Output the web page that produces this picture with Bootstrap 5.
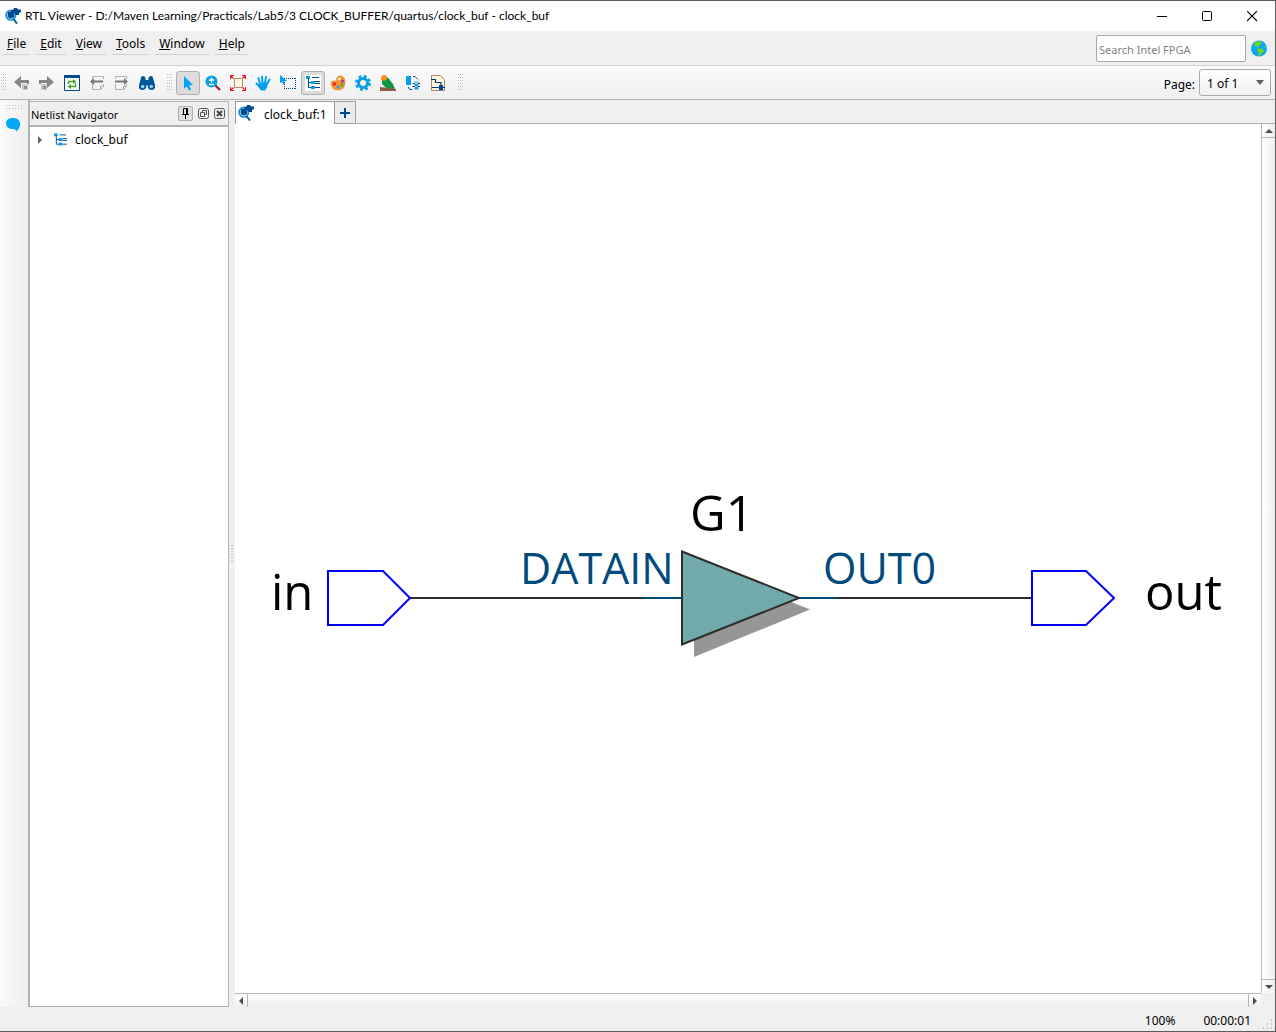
<!DOCTYPE html>
<html lang="en">
<head>
<meta charset="utf-8">
<meta name="viewport" content="width=device-width, initial-scale=1">
<title>RTL Viewer</title>
<link href="https://cdn.jsdelivr.net/npm/bootstrap@5.3.0/dist/css/bootstrap.min.css" rel="stylesheet">
<style>
  body { font-family: "Noto Sans", "Open Sans", sans-serif; font-size: 12px; line-height: 16px; color: #000; background: #efefef; }
  svg { display: block; }
  .app-window { border: 1px solid #5c5c5c; border-left: 0; }
  .title-bar { height: 30px; background: #fff; padding: 0 0 0 5px; }
  .title-text { font-family: Lato, "Open Sans", sans-serif; font-size: 12px; font-weight: 400; }
  .win-btn { width: 45px; height: 30px; border: 0; background: none; padding: 0; }
  .menu-bar { height: 34px; padding: 0 8px 0 3px; }
  .menu-items { gap: 6px; padding-top: 4px; }
  .menu-items a { color: #000; text-decoration: none; padding: 1px 4px 2px; border-bottom: 1px solid #d2d2d2; }
  .search-box { width: 150px; height: 27px; border: 1px solid #a9a9a9; border-radius: 2px; padding: 2px 2px 0; background: #fff; font-size: 11px; }
  .search-box::placeholder { color: #808080; }
  .tool-bar { height: 35px; border-top: 1px solid #d4d4d4; border-bottom: 1px solid #b4b4b4; background: linear-gradient(#fbfbfb, #efefef); padding: 0 4px 0 1px; }
  .tool-set { gap: 1px; }
  .tool-btn { width: 24px; height: 24px; border: 1px solid transparent; border-radius: 3px; padding: 0; background: none; }
  .tool-btn.is-on { background: #dcdcdc; border-color: #b0b0b0; }
  .grip-v { width: 5px; height: 18px; background: conic-gradient(from 0deg at 1px 1px, transparent 270deg, #c0c0c0 0) 0 0 / 2px 3px; }
  .grip-h { width: 16px; height: 5px; background: conic-gradient(from 0deg at 1px 1px, transparent 270deg, #c0c0c0 0) 0 0 / 3px 3px; }
  .page-select { width: 72px; height: 27px; border: 1px solid #a9a9a9; border-radius: 3px; appearance: none; background: linear-gradient(#fff, #f1f1f1); padding: 2px 7px 0; color: #000; font-size: 12px; }
  .page-arrow { top: 11px; right: 7px; pointer-events: none; }
  .side-strip { width: 30px; padding-top: 5px; background: linear-gradient(90deg, #fafafa, #efefef); border-right: 2px solid #b4b4b4; }
  .navigator { width: 199px; border: 1px solid #b4b4b4; border-left: 0; background: #fff; margin-top: 1px; }
  .nav-head { height: 25px; background: #efefef; border-bottom: 2px solid #b4b4b4; padding: 0 1px; }
  .nav-head h2 { font-size: 11px; line-height: 16px; font-weight: 400; padding-top: 3px; }
  .dock-btn { width: 15px; height: 15px; border: 0; background: none; padding: 0; }
  .dock-btn.is-pin { border: 1px solid #b0b0b0; border-radius: 2px; background: #dedede; }
  .tree-row { padding: 5px 8px; gap: 11px; }
  .splitter { width: 6px; }
  .splitter div { width: 2px; height: 17px; background: repeating-linear-gradient(#c4c4c4 0 1px, transparent 1px 3px); }
  .tab-row { height: 24px; border-bottom: 1px solid #b4b4b4; padding-top: 1px; }
  .doc-tab { width: 100px; height: 23px; background: #fff; border: 1px solid #9c9c9c; border-bottom: 0; padding: 0 3px 0 2px; gap: 10px; }
  .doc-tab span { padding-top: 3px; }
  .add-tab { width: 21px; height: 23px; border: 1px solid #a0a0a0; border-left: 0; background: #ebebeb; padding: 0; }
  .canvas-pane { background: #fff; }
  .bar-v { width: 14px; border-left: 1px solid #b9b9b9; background: linear-gradient(90deg, #fff, #efefef); }
  .bar-h { height: 14px; border-top: 1px solid #b9b9b9; background: linear-gradient(#fff, #efefef); }
  .step-btn { width: 13px; height: 14px; border: 0 solid #b9b9b9; background: none; padding: 0; }
  .step-up { border-bottom-width: 1px; }
  .step-down { border-top-width: 1px; }
  .step-left { border-right-width: 1px; }
  .step-right { border-left-width: 1px; }
  .corner { width: 14px; }
  .status-bar { height: 24px; padding: 6px 24px 0 0; gap: 28px; }
  .size-grip { right: 2px; bottom: 1px; }
  .canvas-svg text { font-family: "Open Sans", sans-serif; }
</style>
</head>
<body>
<svg width="0" height="0" class="position-absolute" aria-hidden="true">
  <symbol id="app-logo" viewBox="0 0 16 16">
    <circle cx="5.800" cy="7.200" r="4.800" fill="#75c6ee" stroke="#168fd0" stroke-width="1.600"/>
    <path d="M6 2h2l1-2h3l1 1.500h3V4l-2 1v2h-3L9 5 6 4z" fill="#00498c"/>
    <path d="M3 4h5l1 2v3l-2 1H4L3 8z" fill="#00498c"/>
    <path d="M8.500 11l3.500 4.500" stroke="#005a9e" stroke-width="2"/>
  </symbol>
  <symbol id="tree-icon" viewBox="0 0 14 14">
    <path d="M2.500 2v9.500h3M2.500 6.500h3M6 1.500h7M9 5.500h5M9 7.500h5M9 11.500h5" stroke="#00498c" fill="none"/>
    <path d="M0 0h4v3H0zM5 5h4v3H5zM5 10h4v3H5z" fill="#0a9be8"/>
  </symbol>
</svg>
<div class="app-window vh-100 d-flex flex-column overflow-hidden">
  <header class="title-bar d-flex align-items-center flex-shrink-0">
    <svg width="16" height="16" class="me-1"><use href="#app-logo"/></svg>
    <h1 class="title-text m-0 flex-grow-1 lh-1">RTL Viewer - D:/Maven Learning/Practicals/Lab5/3 CLOCK_BUFFER/quartus/clock_buf - clock_buf</h1>
    <button class="win-btn d-flex align-items-center justify-content-center" aria-label="Minimize"><svg width="11" height="11"><path d="M0 5.500h10" stroke="#000"/></svg></button>
    <button class="win-btn d-flex align-items-center justify-content-center" aria-label="Maximize"><svg width="11" height="11"><rect x=".5" y=".5" width="9" height="9" rx="1" fill="none" stroke="#000"/></svg></button>
    <button class="win-btn d-flex align-items-center justify-content-center" aria-label="Close"><svg width="11" height="11"><path d="M0 0l10 10M10 0L0 10" stroke="#000" stroke-width="1.100"/></svg></button>
  </header>

  <div class="menu-bar d-flex justify-content-between flex-shrink-0">
    <nav class="menu-items d-flex align-items-start" aria-label="Main menu">
      <a href="#"><u>F</u>ile</a><a href="#"><u>E</u>dit</a><a href="#"><u>V</u>iew</a><a href="#"><u>T</u>ools</a><a href="#"><u>W</u>indow</a><a href="#"><u>H</u>elp</a>
    </nav>
    <div class="d-flex align-items-center gap-1">
      <input class="search-box" type="search" placeholder="Search Intel FPGA" aria-label="Search Intel FPGA">
      <svg width="17" height="17" viewBox="0 0 17 17"><circle cx="9" cy="8.500" r="8" fill="#06a7f5"/><path d="M5 2l3-1 3 1 1 2-3 1-1 2 1 1-2-1-3-2zM9 8l4 1 1 2-2 2-2 3-2-1 1-2-2-3zM14 5l2 2-1 1z" fill="#6cd51c"/></svg>
    </div>
  </div>

  <div class="tool-bar d-flex align-items-center flex-shrink-0" role="toolbar" aria-label="Viewer tools">
    <div class="grip-v me-1"></div>
    <div class="tool-set d-flex">
      <button class="tool-btn d-flex align-items-center justify-content-center" aria-label="Back"><svg width="16" height="16"><path d="M0 7l7-6v4h8v4h-2V8H7v5z" fill="#858585"/><path d="M8 9h6v6H8z" fill="#c9c9c9"/><path d="M10 11h3v3h-3z" fill="#909090"/></svg></button>
      <button class="tool-btn d-flex align-items-center justify-content-center" aria-label="Forward"><svg width="16" height="16"><path d="M15 7L8 1v4H0v4h2V8h6v5z" fill="#858585"/><path d="M2 9h6v6H2z" fill="#c9c9c9"/><path d="M4 11h3v3H4z" fill="#909090"/></svg></button>
      <button class="tool-btn d-flex align-items-center justify-content-center" aria-label="Refresh"><svg width="16" height="16"><path d="M.5.5h15v15H.5z" fill="#fff" stroke="#00498c"/><path d="M0 0h16v3H0z" fill="#00498c"/><path d="M4.500 9V6.500H10M11.500 8v3.500H6" fill="none" stroke="#4aa02c" stroke-width="1.400"/><path d="M9 4l3.500 2.500L9 9zM7 9l-3.500 2.500L7 14z" fill="#4aa02c"/></svg></button>
      <button class="tool-btn d-flex align-items-center justify-content-center" aria-label="Previous page"><svg width="16" height="16"><path d="M3.500 4V1.500h11V4M3.500 9v5.500h8l3-3V9M11.500 14v-3h3" stroke="#b0b0b0" fill="none"/><path d="M1 6.500l4-3.500v2.500h9v2H5V10z" fill="#777"/></svg></button>
      <button class="tool-btn d-flex align-items-center justify-content-center" aria-label="Next page"><svg width="16" height="16"><path d="M1.500 4V1.500h11V4M1.500 9v5.500h8l3-3V9M9.500 14v-3h3" stroke="#b0b0b0" fill="none"/><path d="M14 6.500L10 3v2.500H1v2h9V10z" fill="#777"/></svg></button>
      <button class="tool-btn d-flex align-items-center justify-content-center" aria-label="Find"><svg width="16" height="16"><path d="M2 3q0-2 2-2t2.500 2v2h3V3q.5-2 2.500-2t2 2l2 7v3q-1 2-3.500 2T9 13l-.5-3h-1L7 13q-1 2-3.500 2T0 13v-3z" fill="#00559b"/><circle cx="3.700" cy="11.500" r="1.800" fill="#8bd0f5"/><circle cx="12.300" cy="11.500" r="1.800" fill="#8bd0f5"/></svg></button>
    </div>
    <div class="grip-v ms-2 me-1"></div>
    <div class="tool-set d-flex">
      <button class="tool-btn is-on d-flex align-items-center justify-content-center" aria-label="Select"><svg width="16" height="16"><path d="M4 1l9 9-4 .5 2 4-2 1-2-4-3 2z" fill="#00a5f5"/></svg></button>
      <button class="tool-btn d-flex align-items-center justify-content-center" aria-label="Zoom"><svg width="16" height="16"><path d="M10 10l5 5" stroke="#a31f1f" stroke-width="2.200"/><circle cx="6.500" cy="6.500" r="6" fill="#079fe9"/><path d="M4 5h5M6.500 2.500v5M4 9.500h5" stroke="#fff" stroke-width="1.300"/></svg></button>
      <button class="tool-btn d-flex align-items-center justify-content-center" aria-label="Fit in window"><svg width="16" height="16"><path d="M4.500 3.500h7l1 1v8h-8z" fill="#fff4dc" stroke="#a78d74"/><path d="M.5 4V.5H4M.5.5l3 3M15.500 4V.5H12M15.500.5l-3 3M.5 12v3.500H4M.5 15.500l3-3M15.500 12v3.500H12M15.500 15.500l-3-3" fill="none" stroke="#ed1c24" stroke-width="1.200"/></svg></button>
      <button class="tool-btn d-flex align-items-center justify-content-center" aria-label="Hand"><svg width="16" height="16"><path d="M5 9L3.500 3M7.500 8L7 1.500M10 8l1-6M12 9l2.500-4.500M5 12L1.500 8.500" stroke="#079fe9" stroke-width="2" stroke-linecap="round"/><path d="M4 8l9-.5-1 5-2 3H6l-3-4z" fill="#079fe9"/></svg></button>
      <button class="tool-btn d-flex align-items-center justify-content-center" aria-label="Area select"><svg width="16" height="16"><path d="M4 3.500h12M4 13.500h12M4.500 3v11M15.500 3v11" fill="none" stroke="#00498c" stroke-dasharray="1 1" shape-rendering="crispEdges"/><path d="M0 0l7 6-3 .5 1 3-1.500.5-1-3L0 8z" fill="#079fe9"/></svg></button>
      <button class="tool-btn is-on d-flex align-items-center justify-content-center" aria-label="Netlist navigator"><svg width="16" height="16" class="bg-white"><use href="#tree-icon" x="1" y="1" width="14" height="14"/></svg></button>
      <button class="tool-btn d-flex align-items-center justify-content-center" aria-label="Colors"><svg width="16" height="16"><path d="M.5 8.500Q.5 5 6 5.500q0-4.500 4.500-5Q15.500 1 15.500 8q-.5 7-7.500 7.500-7-.500-7.500-7z" fill="#f79531"/><circle cx="4.500" cy="9" r="1.800" fill="#e8203a"/><circle cx="8" cy="12" r="1.600" fill="#2b9df4"/><circle cx="12" cy="10" r="1.700" fill="#58ae31"/><circle cx="12.500" cy="6" r="1.500" fill="#8b3fae"/><circle cx="9.500" cy="4" r="1.300" fill="#fff"/></svg></button>
      <button class="tool-btn d-flex align-items-center justify-content-center" aria-label="Settings"><svg width="16" height="16"><circle cx="8" cy="8" r="6.500" fill="none" stroke="#079fe9" stroke-width="3" stroke-dasharray="2.700 2.400"/><circle cx="8" cy="8" r="4.500" fill="#fff3da" stroke="#079fe9" stroke-width="3"/></svg></button>
      <button class="tool-btn d-flex align-items-center justify-content-center" aria-label="Bird's eye view"><svg width="16" height="16"><path d="M2 5l5-3 3 3 3 4 2 5H7L2 9z" fill="#15a04a"/><path d="M1 4V2l2-2h3l1 3-1 2-3 1-2-1z" fill="#f5921e"/><path d="M3 6l6 7M7 5l6 8" stroke="#0c6b2d"/><path d="M0 12l8 1 8 1v2H0z" fill="#8c594b"/></svg></button>
      <button class="tool-btn d-flex align-items-center justify-content-center" aria-label="Swap view"><svg width="16" height="16"><path d="M1 1h5v9H1z" fill="#079fe9"/><path d="M9 6h5v9H9z" fill="#8bd0f5"/><path d="M8 1.500h2l3 3M3 12l2 2.500h2M7.500 8.500h2M13 8.500h2M7.500 11.500h2M13 11.500h2M10 10h3M10 13h3" fill="none" stroke="#00498c"/></svg></button>
      <button class="tool-btn d-flex align-items-center justify-content-center" aria-label="Show schematic"><svg width="16" height="16"><path d="M1.500.5h9l4 4v11h-13z" fill="#fff4dc" stroke="#a08a74"/><path d="M1 4.500h4.500v3H11V10M2 12.500h7M12 12.500h3" fill="none" stroke="#00397c" stroke-width="1.200"/><path d="M9 10h4v5H9z" fill="#00498c"/></svg></button>
    </div>
    <div class="grip-v ms-2"></div>
    <div class="ms-auto d-flex align-items-center gap-1">
      <label for="page-no" class="pt-1">Page:</label>
      <div class="position-relative">
        <select id="page-no" class="page-select d-block"><option>1 of 1</option></select>
        <svg class="page-arrow position-absolute" width="8" height="5"><path d="M0 0h8L4 5z" fill="#606060"/></svg>
      </div>
    </div>
  </div>

  <main class="d-flex flex-grow-1 overflow-hidden">
    <div class="side-strip d-flex flex-column align-items-center flex-shrink-0">
      <div class="grip-h"></div>
      <svg width="16" height="16" class="mt-2"><path d="M7 0C2.500 0 0 2 0 5.500S3 11 7 11q3 0 3.500 2.500Q15 9 14 5 13 0 7 0z" fill="#06a7f5"/></svg>
    </div>
    <aside class="navigator d-flex flex-column flex-shrink-0">
      <div class="nav-head d-flex align-items-center flex-shrink-0">
        <h2 class="m-0 flex-grow-1">Netlist Navigator</h2>
        <div class="d-flex gap-0 align-items-center">
          <button class="dock-btn is-pin d-flex align-items-center justify-content-center me-1" aria-label="Pin"><svg width="9" height="11"><path d="M2.500 6V.5h4V6M1 6.500h7M4.500 7v4M5.500 1v5" stroke="#000" fill="none"/></svg></button>
          <button class="dock-btn" aria-label="Float"><svg width="13" height="13"><rect x="1.500" y="1.500" width="10" height="10" rx="2" fill="none" stroke="#555"/><path d="M5.500 5.500V3.500h4v4h-2M3.500 5.500h4v4h-4z" fill="none" stroke="#555"/></svg></button>
          <button class="dock-btn" aria-label="Close panel"><svg width="13" height="13"><rect x="2.500" y="1.500" width="10" height="10" rx="2" fill="none" stroke="#555"/><path d="M5 4l5 5M10 4L5 9" stroke="#444" stroke-width="2"/></svg></button>
        </div>
      </div>
      <div class="tree-row d-flex align-items-center">
        <svg width="5" height="8"><path d="M0 0v8l4-4z" fill="#606060"/></svg>
        <div class="d-flex align-items-center gap-2"><svg width="13" height="14"><use href="#tree-icon"/></svg><span>clock_buf</span></div>
      </div>
    </aside>
    <div class="splitter d-flex align-items-center justify-content-center flex-shrink-0"><div></div></div>
    <section class="d-flex flex-column flex-grow-1">
      <div class="tab-row d-flex flex-shrink-0">
        <div class="doc-tab d-flex align-items-center"><svg width="16" height="16"><use href="#app-logo"/></svg><span>clock_buf:1</span></div>
        <button class="add-tab d-flex align-items-center justify-content-center" aria-label="New tab"><svg width="10" height="10"><path d="M0 5h10M5 0v10" stroke="#00498c" stroke-width="2"/></svg></button>
      </div>
      <div class="d-flex flex-grow-1 overflow-hidden">
        <div class="canvas-pane flex-grow-1 overflow-hidden">
          <svg class="canvas-svg w-100 h-100" viewBox="0 0 1026 869" role="img" aria-label="Clock buffer netlist">
            <path d="M175 474h622" stroke="#2d2d2d" stroke-width="2"/>
            <path d="M408 474h39M563 474h40" stroke="#004a7c" stroke-width="2"/>
            <path d="M459 439l116 46.500L459 533z" fill="#969696"/>
            <path d="M447 427.500L564 474 447 520.500z" fill="#72aaac" stroke="#2d2d2d" stroke-width="2"/>
            <path d="M93 447h55l27 27-27 27H93zM797 447h54l28 27-28 27h-54z" fill="#fff" stroke="#00f" stroke-width="2"/>
            <g font-size="49" fill="#000">
              <text x="36" y="486">in</text>
              <text x="455" y="407">G1</text>
              <text x="910" y="486">out</text>
            </g>
            <g font-size="43" fill="#004a7c">
              <text x="285" y="460">DATAIN</text>
              <text x="588" y="460">OUT0</text>
            </g>
          </svg>
        </div>
        <div class="bar-v d-flex flex-column justify-content-between flex-shrink-0">
          <button class="step-btn step-up d-flex align-items-center justify-content-center" aria-label="Scroll up"><svg width="8" height="4"><path d="M0 4h8L4 0z" fill="#505050"/></svg></button>
          <button class="step-btn step-down d-flex align-items-center justify-content-center" aria-label="Scroll down"><svg width="8" height="4"><path d="M0 0h8L4 4z" fill="#505050"/></svg></button>
        </div>
      </div>
      <div class="d-flex flex-shrink-0">
        <div class="bar-h d-flex justify-content-between flex-grow-1">
          <button class="step-btn step-left d-flex align-items-center justify-content-center" aria-label="Scroll left"><svg width="4" height="8"><path d="M4 0v8L0 4z" fill="#505050"/></svg></button>
          <button class="step-btn step-right d-flex align-items-center justify-content-center" aria-label="Scroll right"><svg width="4" height="8"><path d="M0 0v8l4-4z" fill="#505050"/></svg></button>
        </div>
        <div class="corner"></div>
      </div>
    </section>
  </main>

  <footer class="status-bar position-relative d-flex justify-content-end flex-shrink-0">
    <span>100%</span><span>00:00:01</span>
    <svg class="size-grip position-absolute" width="11" height="11"><path d="M9 1h1M9 5h1M5 5h1M9 9h1M5 9h1M1 9h1" stroke="#b5b5b5" stroke-width="1.500"/></svg>
  </footer>
</div>
<script src="https://cdn.jsdelivr.net/npm/bootstrap@5.3.0/dist/js/bootstrap.bundle.min.js"></script>
</body>
</html>
